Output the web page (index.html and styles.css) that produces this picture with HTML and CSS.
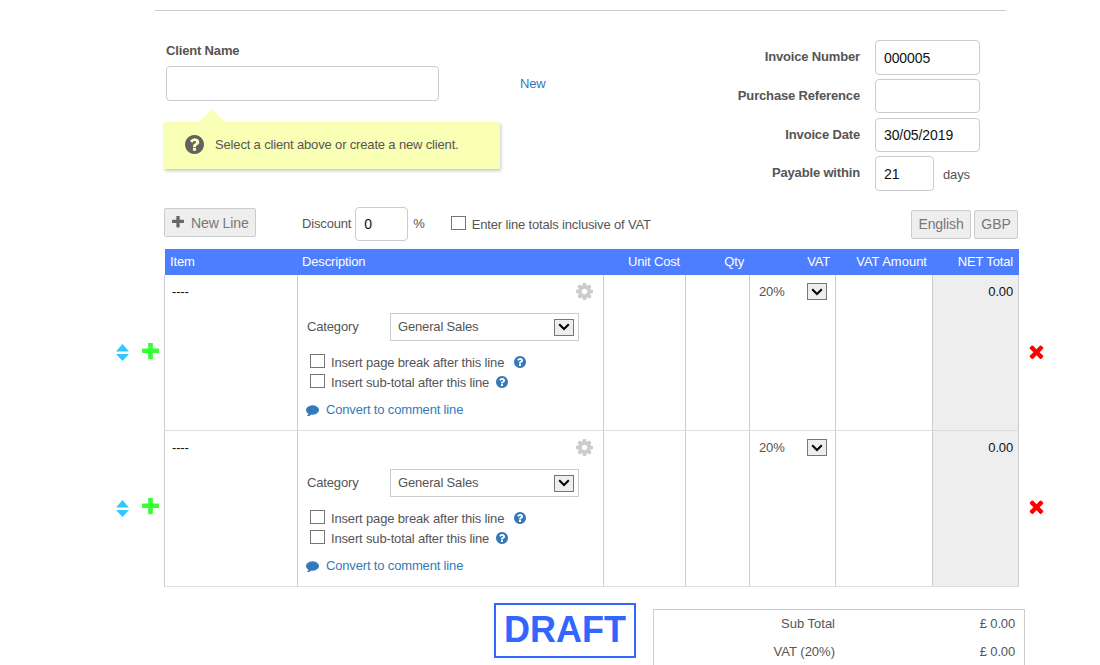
FILE: index.html
```html
<!DOCTYPE html>
<html lang="en">
<head>
<meta charset="utf-8">
<title>Invoice</title>
<link rel="stylesheet" href="styles.css">
</head>
<body>
<svg class="defs" aria-hidden="true">
  <symbol id="i-help" viewBox="128 128 1536 1536"><path d="M1024 1376v-192q0-14-9-23t-23-9h-192q-14 0-23 9t-9 23v192q0 14 9 23t23 9h192q14 0 23-9t9-23zm256-672q0-88-55.5-163t-138.5-116-170-41q-243 0-371 213-15 24 8 42l132 100q7 6 19 6 16 0 25-12 53-68 86-92 34-24 86-24 48 0 85.5 26t37.5 59q0 38-20 61t-68 45q-63 28-115.5 86.5t-52.5 125.5v36q0 14 9 23t23 9h192q14 0 23-9t9-23q0-19 21.5-49.5t54.5-49.5q32-18 49-28.5t46-35 44.5-48 28-60.5 12.5-81zm384 192q0 209-103 385.5t-279.5 279.5-385.5 103-385.5-103-279.5-279.5-103-385.5 103-385.5 279.5-279.5 385.5-103 385.5 103 279.5 279.5 103 385.5z"/></symbol>
  <symbol id="i-plus" viewBox="192 192 1408 1408"><path d="M1600 736v192q0 40-28 68t-68 28h-416v416q0 40-28 68t-68 28h-192q-40 0-68-28t-28-68v-416h-416q-40 0-68-28t-28-68v-192q0-40 28-68t68-28h416v-416q0-40 28-68t68-28h192q40 0 68 28t28 68v416h416q40 0 68 28t28 68z"/></symbol>
  <symbol id="i-times" viewBox="302 238 1188 1316"><path d="M1490 1322q0 40-28 68l-136 136q-28 28-68 28t-68-28l-294-294-294 294q-28 28-68 28t-68-28l-136-136q-28-28-28-68t28-68l294-294-294-294q-28-28-28-68t28-68l136-136q28-28 68-28t68 28l294 294 294-294q28-28 68-28t68 28l136 136q28 28 28 68t-28 68l-294 294 294 294q28 28 28 68z"/></symbol>
  <symbol id="i-cog" viewBox="128 128 1536 1536"><path d="M1152 896q0-106-75-181t-181-75-181 75-75 181 75 181 181 75 181-75 75-181zm512-109v222q0 12-8 23t-20 13l-185 28q-19 54-39 91 35 50 107 138 10 12 10 25t-9 23q-27 37-99 108t-94 71q-12 0-26-9l-138-108q-44 23-91 38-16 136-29 186-7 28-36 28h-222q-14 0-24.5-8.5t-11.5-21.5l-28-184q-49-16-90-37l-141 107q-10 9-25 9-14 0-25-11-126-114-165-168-7-10-7-23 0-12 8-23 15-21 51-66.5t54-70.5q-27-50-41-99l-183-27q-13-2-21-12.5t-8-23.5v-222q0-12 8-23t19-13l186-28q14-46 39-92-40-57-107-138-10-12-10-24 0-10 9-23 26-36 98.5-107.5t94.5-71.5q13 0 26 10l138 107q44-23 91-38 16-136 29-186 7-28 36-28h222q14 0 24.5 8.5t11.5 21.5l28 184q49 16 90 37l142-107q9-9 24-9 13 0 25 10 129 119 165 170 7 8 7 22 0 12-8 23-15 21-51 66.5t-54 70.5q26 50 41 98l183 28q13 2 21 12.5t8 23.5z"/></symbol>
  <symbol id="i-comment" viewBox="0 128 1792 1536"><path d="M1792 896q0 174-120 321.5t-326 233-450 85.5q-70 0-145-8-198 175-460 242-49 14-114 22-17 2-30.5-9t-17.5-29v-1q-3-4-.5-12t2-10 4.5-9.5l6-9 7-8.5 8-9q7-8 31-34.5t34.5-38 31-39.5 32.5-51 27-59 26-76q-157-89-247.5-220t-90.5-281q0-130 71-248.5t191-204.5 286-136.5 348-50.5q244 0 450 85.5t326 233 120 321.5z"/></symbol>
  <symbol id="i-sort" viewBox="0 0 13 17"><path d="M6.5 0 13 7.5H0zM0 10h13l-6.5 7z"/></symbol>
  <symbol id="i-chev" viewBox="0 0 12 8"><path d="M1.2 1.2 6 6l4.8-4.8" fill="none" stroke="currentColor" stroke-width="2"/></symbol>
</svg>

<div class="page">
  <div class="rule"></div>

  <section class="top">
    <div class="client">
      <div class="label-strong client-label">Client Name</div>
      <div class="client-row">
        <input class="field client-input" type="text" aria-label="Client Name">
        <a class="link new-link" href="#">New</a>
      </div>
      <div class="hint">
        <svg class="hint-icon"><use href="#i-help"/></svg>
        <span>Select a client above or create a new client.</span>
      </div>
    </div>

    <div class="meta">
      <div class="label-strong meta-label">Invoice Number</div>
      <input class="field meta-input tall" type="text" value="000005">
      <div class="label-strong meta-label">Purchase Reference</div>
      <input class="field meta-input" type="text">
      <div class="label-strong meta-label">Invoice Date</div>
      <input class="field meta-input" type="text" value="30/05/2019">
      <div class="label-strong meta-label">Payable within</div>
      <div class="payable">
        <input class="field days-input tall" type="text" value="21">
        <span class="days">days</span>
      </div>
    </div>
  </section>

  <section class="toolbar">
    <button class="btn new-line" type="button"><svg class="btn-icon"><use href="#i-plus"/></svg>New Line</button>
    <span class="discount-label">Discount</span>
    <input class="field discount-input" type="text" value="0">
    <span class="percent">%</span>
    <input class="check inclusive-check" type="checkbox">
    <span class="inclusive">Enter line totals inclusive of VAT</span>
    <button class="btn lang" type="button">English</button>
    <button class="btn cur" type="button">GBP</button>
  </section>

  <div class="thead">
    <div class="th">Item</div>
    <div class="th th-desc">Description</div>
    <div class="th right">Unit Cost</div>
    <div class="th right">Qty</div>
    <div class="th right th-vat">VAT</div>
    <div class="th right th-amount">VAT Amount</div>
    <div class="th right">NET Total</div>
  </div>

  <div class="line">
    <div class="gutter">
      <svg class="sort"><use href="#i-sort"/></svg>
      <svg class="add"><use href="#i-plus"/></svg>
    </div>
    <div class="cells">
      <div class="cell item">----</div>
      <div class="cell desc">
        <svg class="cog"><use href="#i-cog"/></svg>
        <div class="cat-row">
          <span class="cat-label">Category</span>
          <div class="select cat-select"><span>General Sales</span><span class="drop"><svg class="chev"><use href="#i-chev"/></svg></span></div>
        </div>
        <label class="opt opt-first"><input class="check" type="checkbox"><span>Insert page break after this line</span><svg class="help help-a"><use href="#i-help"/></svg></label>
        <label class="opt"><input class="check" type="checkbox"><span>Insert sub-total after this line</span><svg class="help help-b"><use href="#i-help"/></svg></label>
        <a class="link convert" href="#"><svg class="comment"><use href="#i-comment"/></svg>Convert to comment line</a>
      </div>
      <div class="cell"></div>
      <div class="cell"></div>
      <div class="cell vat"><span>20%</span><span class="drop"><svg class="chev"><use href="#i-chev"/></svg></span></div>
      <div class="cell"></div>
      <div class="cell net">0.00</div>
    </div>
    <svg class="del"><use href="#i-times"/></svg>
  </div>

  <div class="line">
    <div class="gutter">
      <svg class="sort"><use href="#i-sort"/></svg>
      <svg class="add"><use href="#i-plus"/></svg>
    </div>
    <div class="cells">
      <div class="cell item">----</div>
      <div class="cell desc">
        <svg class="cog"><use href="#i-cog"/></svg>
        <div class="cat-row">
          <span class="cat-label">Category</span>
          <div class="select cat-select"><span>General Sales</span><span class="drop"><svg class="chev"><use href="#i-chev"/></svg></span></div>
        </div>
        <label class="opt opt-first"><input class="check" type="checkbox"><span>Insert page break after this line</span><svg class="help help-a"><use href="#i-help"/></svg></label>
        <label class="opt"><input class="check" type="checkbox"><span>Insert sub-total after this line</span><svg class="help help-b"><use href="#i-help"/></svg></label>
        <a class="link convert" href="#"><svg class="comment"><use href="#i-comment"/></svg>Convert to comment line</a>
      </div>
      <div class="cell"></div>
      <div class="cell"></div>
      <div class="cell vat"><span>20%</span><span class="drop"><svg class="chev"><use href="#i-chev"/></svg></span></div>
      <div class="cell"></div>
      <div class="cell net">0.00</div>
    </div>
    <svg class="del"><use href="#i-times"/></svg>
  </div>

  <section class="foot">
    <div class="draft">DRAFT</div>
    <div class="totals">
      <div class="total-row"><span class="total-label">Sub Total</span><span class="total-value">£ 0.00</span></div>
      <div class="total-row"><span class="total-label">VAT (20%)</span><span class="total-value">£ 0.00</span></div>
    </div>
  </section>
</div>
</body>
</html>
```

FILE: styles.css
```css
* { box-sizing: border-box; }
html, body { margin: 0; height: 665px; overflow: hidden; background: #fff; }
body { font-family: "Liberation Sans", Arial, sans-serif; font-size: 13px; letter-spacing: -0.16px; color: #555; }
.defs { display: none; }
.page { width: 1100px; }
a { text-decoration: none; }
.link { color: #337ab7; }

.rule { margin: 10px 94px 0 155px; border-top: 1px solid #ccc; }

.top { display: flex; justify-content: space-between; margin: 0 120px 0 164px; height: 196px; }
.label-strong { font-weight: 700; color: #555; }
.field {
  display: block; margin: 0; padding: 0 8px; border: 1px solid #ccc; border-radius: 4px;
  background: #fff; color: #111; font: 14px "Liberation Sans", Arial, sans-serif; letter-spacing: -0.1px; outline: 0;
}

.client { width: 336px; padding-top: 32px; }
.client-label { margin-left: 2px; height: 23px; line-height: 15px; }
.client-row { display: flex; align-items: center; margin-left: 2px; width: 400px; }
.client-input { width: 273px; height: 35px; flex: none; }
.new-link { margin-left: 81px; }

.hint {
  position: relative; display: flex; align-items: center; height: 47px; margin-top: 21px;
  padding: 0 0 3px 21px; background: #f9ffb4; box-shadow: 1px 2px 3px rgba(0,0,0,.22); color: #555;
}
.hint::before {
  content: ""; position: absolute; left: 35px; top: -13px; width: 0; height: 0;
  border-left: 13px solid transparent; border-right: 13px solid transparent; border-bottom: 13px solid #f9ffb4;
}
.hint-icon { width: 19px; height: 19px; margin-right: 11px; fill: #616161; flex: none; }

.meta { display: grid; grid-template-columns: auto 105px; grid-template-rows: 39px 39px 38px 35px; column-gap: 15px; padding-top: 29px; height: 180px; }
.meta-label { text-align: right; line-height: 15px; padding-top: 9px; }
.meta-input { width: 105px; height: 34px; }
.tall { height: 35px; }
.payable { display: flex; align-items: center; white-space: nowrap; }
.days-input { width: 59px; }
.days { margin-left: 9px; padding-top: 1px; }

.toolbar { display: flex; align-items: center; margin-left: 164px; width: 854px; height: 34px; }
.btn {
  height: 29px; padding: 0; border: 1px solid #ccc; border-radius: 2px; background: #eee; color: #777;
  font: 14px "Liberation Sans", Arial, sans-serif; letter-spacing: -0.1px;
}
.new-line { display: flex; align-items: center; width: 92px; margin-top: -4px; padding: 1px 0 0 7px; }
.btn-icon { width: 12px; height: 12px; margin: -1px 7px 0 0; fill: #666; }
.discount-label { margin-left: 46px; margin-top: -1px; }
.discount-input { width: 53px; height: 34px; margin-left: 4px; }
.percent { margin-left: 5px; margin-top: -2px; }
.check {
  appearance: none; -webkit-appearance: none; display: block; width: 15px; height: 14px; margin: 0; flex: none;
  background: #fff; border: 1px solid #767676;
}
.inclusive-check { margin-left: 26px; margin-top: -2px; }
.inclusive { margin-left: 6px; }
.lang { width: 60px; margin-left: auto; margin-top: 1px; padding-bottom: 1px; }
.cur { width: 44px; margin-left: 3px; margin-top: 1px; padding-bottom: 1px; }

.thead, .cells { display: grid; grid-template-columns: 133px 306px 82px 64px 86px 97px 86px; }
.thead { margin: 8px 0 0 165px; width: 854px; height: 26px; background: #4d7eff; }
.th { color: #fff; line-height: 25px; padding: 0 6px 0 5px; }
.th.right { text-align: right; }
.th-desc { padding-left: 4px; }
.th-vat { padding-right: 6px; }
.th-amount { letter-spacing: 0; }

.line { display: flex; height: 156px; }
.gutter { display: flex; align-items: center; width: 164px; padding-left: 116px; padding-bottom: 1px; }
.line + .line .add { margin-top: -4px; }
.sort { width: 13px; height: 17px; fill: #33c6ff; flex: none; }
.add { width: 17px; height: 17px; margin-left: 13px; margin-top: -2px; fill: #33ff33; flex: none; }
.cells { width: 855px; border-left: 1px solid #ccc; border-bottom: 1px solid #ddd; }
.cell { border-right: 1px solid #ccc; min-width: 0; }
.item { padding: 10px 0 0 7px; color: #111; line-height: 14px; }
.del { width: 15px; height: 15px; margin: 69px 0 0 10px; fill: #f00; flex: none; }
.line + .line .del { margin-top: 68px; }

.desc { display: flex; flex-direction: column; padding-top: 8px; }
.cog { width: 17px; height: 17px; margin-left: 278px; fill: #ccc; flex: none; }
.cat-row { display: flex; align-items: center; margin-top: 13px; padding-left: 9px; }
.cat-label { width: 83px; padding-bottom: 2px; }
.select { display: flex; align-items: center; justify-content: space-between; }
.cat-select { width: 189px; height: 28px; padding: 0 4px 0 7px; border: 1px solid #ccc; }
.cat-select > span:first-child { padding-bottom: 2px; }
.drop {
  display: flex; align-items: center; justify-content: center; width: 20px; height: 17px;
  background: #eee; border: 1px solid #767676; color: #000;
}
.chev { width: 12px; height: 8px; }
.opt { display: flex; align-items: center; height: 20px; padding-left: 12px; }
.opt-first { margin-top: 11px; }
.opt .check { margin-top: -2px; margin-right: 6px; }
.opt span { padding-top: 1px; }
.help { width: 12px; height: 12px; fill: #337ab7; flex: none; }
.help-a { margin-left: 10px; }
.help-b { margin-left: 7px; }
.convert { display: flex; align-items: center; margin: 8px 0 0 8px; height: 18px; padding-top: 1px; }
.comment { width: 13px; height: 12px; margin-right: 7px; fill: #337ab7; flex: none; }

.vat { display: flex; align-items: flex-start; justify-content: space-between; padding: 8px 8px 0 9px; }
.vat > span:first-child { line-height: 17px; }
.net { background: #eee; color: #111; text-align: right; padding: 9px 5px 0 0; line-height: 15px; }

.foot { display: flex; align-items: flex-start; margin: 16px 0 0 494px; }
.draft {
  width: 142px; height: 55px; border: 2px solid #3366ff; color: #3366ff;
  font-size: 36px; font-weight: 700; letter-spacing: 0; line-height: 49px; text-align: center;
}
.totals { width: 372px; height: 120px; margin: 6px 0 0 17px; border: 1px solid #ccc; }
.total-row { display: flex; height: 28px; line-height: 28px; }
.total-label { width: 181px; text-align: right; letter-spacing: 0; }
.total-value { margin-left: auto; padding-right: 9px; }
```
